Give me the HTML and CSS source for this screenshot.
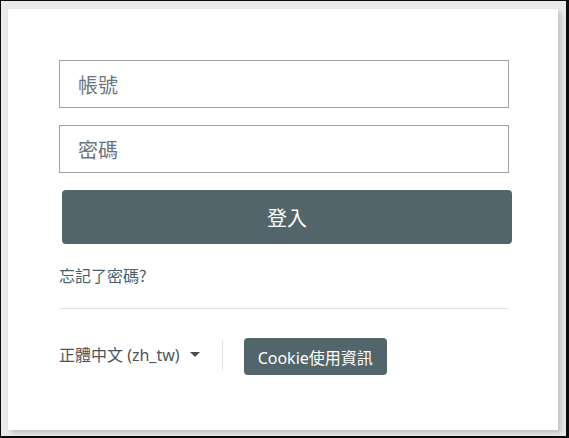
FILE: index.html
```html
<!DOCTYPE html>
<html lang="zh-Hant">
<head>
<meta charset="utf-8">
<title>登入</title>
<link rel="stylesheet" href="styles.css">
</head>
<body>
<div class="frame">
  <div class="card">
    <form class="login-form">
      <input class="field" type="text" placeholder="帳號">
      <input class="field" type="password" placeholder="密碼">
      <button class="btn-login" type="button">登入</button>
    </form>
    <div class="forgot"><a href="#">忘記了密碼?</a></div>
    <div class="divider"></div>
    <div class="footer">
      <div class="lang">正體中文 (zh_tw)<span class="caret"></span></div>
      <div class="sep"></div>
      <button class="btn-cookie" type="button">Cookie使用資訊</button>
    </div>
  </div>
</div>
</body>
</html>
```

FILE: styles.css
```css
html, body {
  margin: 0;
  padding: 0;
}
body {
  font-family: "Noto Sans", "Noto Sans CJK TC", sans-serif;
}
.frame {
  box-sizing: border-box;
  width: 569px;
  height: 438px;
  border-style: solid;
  border-color: #0c0c0c;
  border-width: 1px 3px 2px 1px;
  background: #e8eaec;
  padding: 8px 8px 6px 7px;
}
.card {
  box-sizing: border-box;
  width: 550px;
  height: 421px;
  background: #ffffff;
  box-shadow: 3px 3px 5px rgba(0, 0, 0, 0.18);
  padding: 51px 0 0 51px;
}
.login-form {
  display: flex;
  flex-direction: column;
  align-items: flex-start;
}
.field {
  box-sizing: border-box;
  width: 450px;
  height: 48px;
  margin: 0 0 17px 0;
  padding: 0 18px;
  border: 1px solid #9fa3a8;
  border-radius: 0;
  font-family: "Noto Sans CJK TC", sans-serif;
  font-size: 20px;
  color: #495057;
  outline: none;
}
.field::placeholder {
  color: #6c757d;
}
.btn-login {
  box-sizing: border-box;
  width: 450px;
  height: 54px;
  margin-left: 3px;
  border: none;
  border-radius: 4px;
  background: #52656b;
  color: #ffffff;
  font-family: "Noto Sans CJK TC", sans-serif;
  font-size: 20px;
  padding: 0;
}
.forgot {
  margin-top: 19px;
  height: 24px;
  line-height: 24px;
  font-size: 16px;
}
.forgot a {
  color: #475f6a;
  text-decoration: none;
  font-family: "Noto Sans CJK TC", sans-serif;
}
.divider {
  margin-top: 21px;
  width: 450px;
  height: 1px;
  background: #dee2e6;
}
.footer {
  margin-top: 29px;
  height: 37px;
  display: flex;
  align-items: center;
}
.lang {
  display: flex;
  align-items: center;
  font-size: 16px;
  color: #4d545b;
  line-height: 24px;
  margin-top: -4px;
}
.caret {
  display: inline-block;
  width: 0;
  height: 0;
  margin-left: 10px;
  border-left: 5px solid transparent;
  border-right: 5px solid transparent;
  border-top: 5px solid #4a4f55;
}
.sep {
  width: 1px;
  height: 31px;
  background: #dee2e6;
  margin: -2px 21px 0 22px;
}
.btn-cookie {
  box-sizing: border-box;
  height: 37px;
  padding: 0 14px;
  border: none;
  border-radius: 4px;
  background: #52656b;
  color: #ffffff;
  font-family: "Noto Sans", "Noto Sans CJK TC", sans-serif;
  font-size: 16px;
}
```
